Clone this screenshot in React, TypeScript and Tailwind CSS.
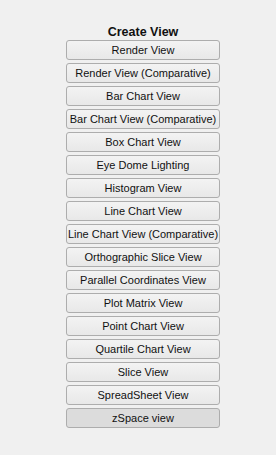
import React from "react";

const items = [
  "Render View",
  "Render View (Comparative)",
  "Bar Chart View",
  "Bar Chart View (Comparative)",
  "Box Chart View",
  "Eye Dome Lighting",
  "Histogram View",
  "Line Chart View",
  "Line Chart View (Comparative)",
  "Orthographic Slice View",
  "Parallel Coordinates View",
  "Plot Matrix View",
  "Point Chart View",
  "Quartile Chart View",
  "Slice View",
  "SpreadSheet View",
  "zSpace view",
];

export default function App() {
  return (
    <div className="w-[276px] h-[455px] bg-[#f0f0f0] text-black font-['Liberation_Sans',sans-serif]">
      <div className="pl-[66px] pt-[24px] w-[220px] flex flex-col">
        <div className="h-[16px] text-center text-[12.5px] font-bold leading-[16px] text-[#111]">
          Create View
        </div>
        <div className="flex flex-col gap-[3px]">
          {items.map((t, i) => {
            const last = i === items.length - 1;
            return (
              <div
                key={t}
                className={
                  "h-[20px] w-[154px] rounded-[3px] border flex items-center justify-center pt-[1px] text-[11px] leading-none whitespace-nowrap text-[#111] " +
                  (last
                    ? "border-[#adadad] bg-[#dcdcdc]"
                    : "border-[#adadad] bg-gradient-to-b from-[#f3f3f3] to-[#e8e8e8]")
                }
              >
                {t}
              </div>
            );
          })}
        </div>
      </div>
    </div>
  );
}
